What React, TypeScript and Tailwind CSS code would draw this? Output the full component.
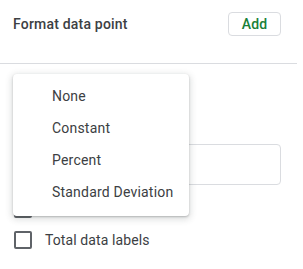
import { useState } from "react"

const options = ["None", "Constant", "Percent", "Standard Deviation"]

function Checkbox({ label }: { label?: string }) {
  return (
    <div className="flex items-center h-[18px]">
      <div className="ml-[14px] w-[18px] h-[18px] rounded-[2px] border-2 border-[#5f6368]" />
      {label && <span className="ml-[13px] text-[14px] tracking-[0.1px] text-[#3c4043]">{label}</span>}
    </div>
  )
}

export default function App() {
  const [selected] = useState("None")

  return (
    <div className="relative w-[303px] h-[269px] overflow-hidden bg-white font-['Roboto','Liberation_Sans',sans-serif]">
      {/* header */}
      <div className="flex items-center justify-between h-[48px] pl-[13px] pr-[22px]">
        <span className="text-[14px] font-medium tracking-[0.2px] text-[#3c4043]">Format data point</span>
        <button className="w-[53px] h-[24px] rounded-[4px] border border-[#dadce0] text-[14px] font-medium tracking-[0.2px] text-[#188038]">
          Add
        </button>
      </div>
      <div className="mt-[15px] mr-[6px] h-px bg-[#dadce0]" />

      {/* panel body, mostly under the menu */}
      <div className="flex flex-col pl-[13px] pr-[22px]">
        <div className="mt-[16px] h-[36px] w-[176px] rounded-[4px] border border-[#dadce0]" />
        <div className="mt-[28px] h-[41px] rounded-[4px] border border-[#dadce0]" />
      </div>
      <div className="flex flex-col gap-[13px] mt-[15px]">
        <Checkbox />
        <Checkbox label="Total data labels" />
      </div>

      {/* open dropdown menu */}
      <div className="absolute left-[13px] top-[74px] w-[176px] pt-[6px] pb-[8px] rounded-[4px] bg-white shadow-[0_2px_6px_2px_rgba(60,64,67,0.15),0_1px_2px_rgba(60,64,67,0.3)]">
        {options.map((o) => (
          <div
            key={o}
            className={`flex items-center h-[32px] pl-[39px] text-[14px] tracking-[0.2px] text-[#3c4043] ${o === selected ? "" : ""}`}
          >
            {o}
          </div>
        ))}
      </div>
    </div>
  )
}
